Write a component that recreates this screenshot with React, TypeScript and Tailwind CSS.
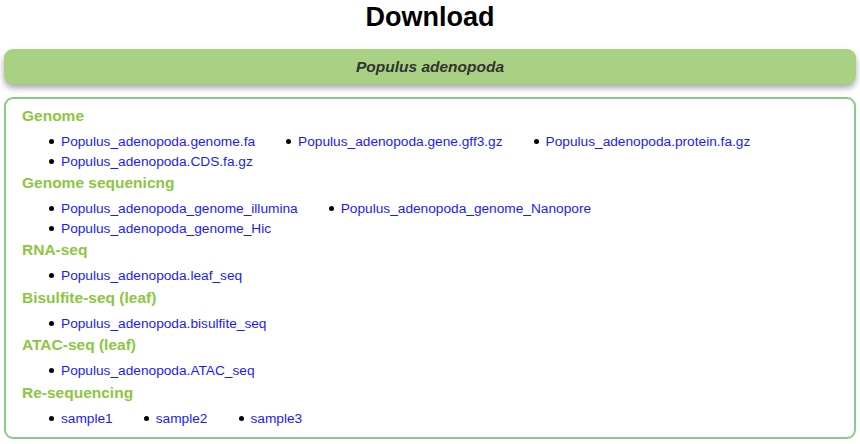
const sections: { title: string; items: string[] }[] = [
  {
    title: "Genome",
    items: [
      "Populus_adenopoda.genome.fa",
      "Populus_adenopoda.gene.gff3.gz",
      "Populus_adenopoda.protein.fa.gz",
      "Populus_adenopoda.CDS.fa.gz",
    ],
  },
  {
    title: "Genome sequenicng",
    items: [
      "Populus_adenopoda_genome_illumina",
      "Populus_adenopoda_genome_Nanopore",
      "Populus_adenopoda_genome_Hic",
    ],
  },
  { title: "RNA-seq", items: ["Populus_adenopoda.leaf_seq"] },
  { title: "Bisulfite-seq (leaf)", items: ["Populus_adenopoda.bisulfite_seq"] },
  { title: "ATAC-seq (leaf)", items: ["Populus_adenopoda.ATAC_seq"] },
  { title: "Re-sequencing", items: ["sample1", "sample2", "sample3"] },
];

export default function App() {
  return (
    <div className="w-[860px] h-[444px] bg-white font-['Liberation_Sans',Arial,sans-serif] overflow-hidden">
      <h1 className="text-center text-[27px] font-bold text-black leading-none pt-[4px] h-[49px]">
        Download
      </h1>

      <div className="mx-[4px] h-[35px] rounded-[9px] bg-[#a8d183] shadow-[0_4px_6px_rgba(0,0,0,0.35)] flex items-center justify-center">
        <span className="text-[15.5px] font-bold italic text-[#333333]">Populus adenopoda</span>
      </div>

      <div className="mx-[4px] mt-[13px] h-[342px] rounded-[9px] border-2 border-[#88cc88] pl-[16px] pt-[8px]">
        {sections.map((s) => (
          <div key={s.title}>
            <h2 className="text-[15.5px] font-bold text-[#8cc63f] leading-[18px]">{s.title}</h2>
            <ul className="flex flex-wrap max-w-[790px] pl-[27px] mt-[7px] mb-[3px]">
              {s.items.map((it) => (
                <li key={it} className="flex items-center mr-[31px] h-[19.5px] text-[13.7px] leading-[19.5px]">
                  <span className="w-[5px] h-[5px] rounded-full bg-black mr-[7px]" />
                  <a href="#" className="text-[#1a1aff]">{it}</a>
                </li>
              ))}
            </ul>
          </div>
        ))}
      </div>
    </div>
  );
}
